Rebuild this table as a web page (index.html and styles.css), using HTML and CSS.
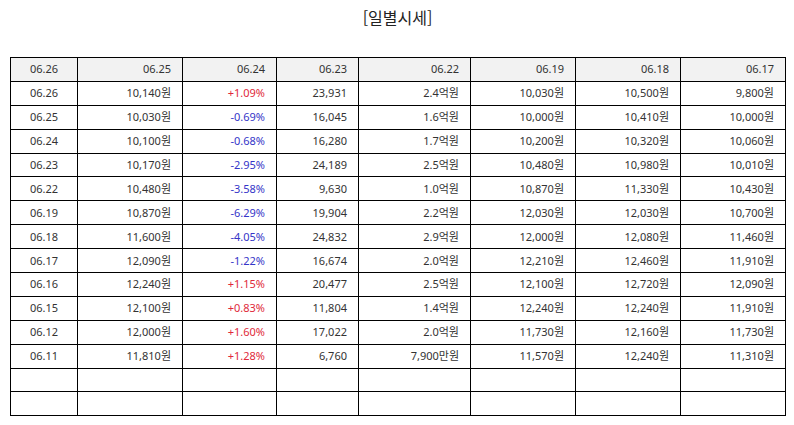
FILE: index.html
```html
<!DOCTYPE html>
<html lang="ko">
<head>
<meta charset="utf-8">
<title>일별시세</title>
<link rel="stylesheet" href="styles.css">
</head>
<body>
<div class="page">
  <h2 class="title">[일별시세]</h2>
  <table class="daily">
    <colgroup>
      <col class="c1"><col class="c2"><col class="c3"><col class="c4"><col class="c5"><col class="c6"><col class="c7"><col class="c8">
    </colgroup>
    <thead>
      <tr><th class="center">06.26</th><th>06.25</th><th>06.24</th><th>06.23</th><th>06.22</th><th>06.19</th><th>06.18</th><th>06.17</th></tr>
    </thead>
    <tbody>
      <tr><td class="center">06.26</td><td>10,140원</td><td class="up">+1.09%</td><td>23,931</td><td>2.4억원</td><td>10,030원</td><td>10,500원</td><td>9,800원</td></tr>
      <tr><td class="center">06.25</td><td>10,030원</td><td class="down">-0.69%</td><td>16,045</td><td>1.6억원</td><td>10,000원</td><td>10,410원</td><td>10,000원</td></tr>
      <tr><td class="center">06.24</td><td>10,100원</td><td class="down">-0.68%</td><td>16,280</td><td>1.7억원</td><td>10,200원</td><td>10,320원</td><td>10,060원</td></tr>
      <tr><td class="center">06.23</td><td>10,170원</td><td class="down">-2.95%</td><td>24,189</td><td>2.5억원</td><td>10,480원</td><td>10,980원</td><td>10,010원</td></tr>
      <tr><td class="center">06.22</td><td>10,480원</td><td class="down">-3.58%</td><td>9,630</td><td>1.0억원</td><td>10,870원</td><td>11,330원</td><td>10,430원</td></tr>
      <tr><td class="center">06.19</td><td>10,870원</td><td class="down">-6.29%</td><td>19,904</td><td>2.2억원</td><td>12,030원</td><td>12,030원</td><td>10,700원</td></tr>
      <tr><td class="center">06.18</td><td>11,600원</td><td class="down">-4.05%</td><td>24,832</td><td>2.9억원</td><td>12,000원</td><td>12,080원</td><td>11,460원</td></tr>
      <tr><td class="center">06.17</td><td>12,090원</td><td class="down">-1.22%</td><td>16,674</td><td>2.0억원</td><td>12,210원</td><td>12,460원</td><td>11,910원</td></tr>
      <tr><td class="center">06.16</td><td>12,240원</td><td class="up">+1.15%</td><td>20,477</td><td>2.5억원</td><td>12,100원</td><td>12,720원</td><td>12,090원</td></tr>
      <tr><td class="center">06.15</td><td>12,100원</td><td class="up">+0.83%</td><td>11,804</td><td>1.4억원</td><td>12,240원</td><td>12,240원</td><td>11,910원</td></tr>
      <tr><td class="center">06.12</td><td>12,000원</td><td class="up">+1.60%</td><td>17,022</td><td>2.0억원</td><td>11,730원</td><td>12,160원</td><td>11,730원</td></tr>
      <tr><td class="center">06.11</td><td>11,810원</td><td class="up">+1.28%</td><td>6,760</td><td>7,900만원</td><td>11,570원</td><td>12,240원</td><td>11,310원</td></tr>
      <tr><td></td><td></td><td></td><td></td><td></td><td></td><td></td><td></td></tr>
      <tr><td></td><td></td><td></td><td></td><td></td><td></td><td></td><td></td></tr>
    </tbody>
  </table>
</div>
</body>
</html>
```
FILE: styles.css
```css
html, body {
  margin: 0;
  padding: 0;
  background: #ffffff;
}
body {
  font-family: "Noto Sans", "Noto Sans CJK KR", sans-serif;
  color: #333333;
}
.page {
  padding: 0 9px 0 10px;
}
.title {
  margin: 0;
  height: 57px;
  padding-top: 5px;
  box-sizing: border-box;
  text-align: center;
  font-family: "Noto Sans CJK KR", sans-serif;
  font-size: 16px;
  font-weight: normal;
  line-height: 24px;
  color: #222222;
}
.daily {
  width: 775px;
  border-collapse: collapse;
  table-layout: fixed;
  font-size: 11px;
}
.c1 { width: 67px; }
.c2 { width: 105px; }
.c3 { width: 94px; }
.c4 { width: 82px; }
.c5 { width: 112px; }
.c6 { width: 105px; }
.c7 { width: 105px; }
.c8 { width: 105px; }
.daily tr {
  height: 23.9px;
}
.daily th,
.daily td {
  border: 1px solid #000000;
  padding: 0 11px 0 4px;
  text-align: right;
  font-weight: normal;
  white-space: nowrap;
  line-height: 14px;
}
.daily th {
  background: #f2f2f2;
}
.daily .center {
  text-align: center;
  padding: 0;
}
.daily .up {
  color: #e0293a;
}
.daily .down {
  color: #3535c8;
}
```
